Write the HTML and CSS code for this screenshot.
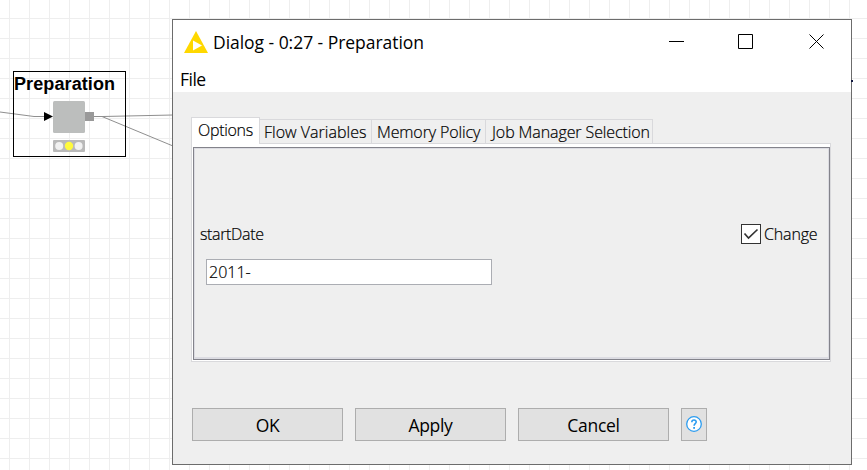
FILE: index.html
```html
<!DOCTYPE html>
<html lang="en">
<head>
<meta charset="utf-8">
<title>Dialog - 0:27 - Preparation</title>
<link rel="stylesheet" href="styles.css">
</head>
<body>
<main class="canvas">
  <svg class="wires" width="867" height="470" viewBox="0 0 867 470" fill="none" stroke="#8f8f8f">
    <path d="M0 112 L34 116.500 H46 M94 116.500 H103 L173 115 M102 116.500 L173 146"/>
  </svg>
  <section class="node">
    <h2 class="node-title">Preparation</h2>
    <svg class="node-body" width="56" height="53" viewBox="0 0 56 53">
      <path d="M4 11 L13 15.500 L4 20z" fill="#000"/>
      <rect x="13" y="0" width="32" height="32" rx="1.500" fill="#bcbebd"/>
      <rect x="45" y="11" width="9" height="9" fill="#999"/>
      <rect x="13" y="39" width="32" height="12" rx="1" fill="#b9b9b9"/>
      <circle cx="19.200" cy="45" r="4" fill="#f1f1f1"/>
      <circle cx="29" cy="45" r="4.200" fill="#fffa3c"/>
      <circle cx="38.600" cy="45" r="4" fill="#f1f1f1"/>
    </svg>
  </section>
  <section class="dialog">
    <header class="titlebar">
      <svg class="logo" width="24" height="22" viewBox="0 0 24 22">
        <path d="M12 0 L24 22 H0z" fill="#ffd800"/>
        <path d="M9 9.500 L18 14.500 L9 19.500z" fill="#fff"/>
      </svg>
      <h1 class="title">Dialog - 0:27 - Preparation</h1>
      <svg class="controls" width="157" height="16" viewBox="0 0 157 16" fill="none" stroke="#000">
        <path d="M0 7.500h15M69.500 .5h14v14h-14zM140.500 .5l14 14M154.500 .5l-14 14"/>
      </svg>
    </header>
    <nav class="menubar"><span class="menu">File</span></nav>
    <div class="content">
      <div class="tabs">
        <div class="tab active"><span class="t-options">Options</span></div>
        <div class="tab flow"><span class="t-flow">Flow Variables</span></div>
        <div class="tab memory"><span class="t-memory">Memory Policy</span></div>
        <div class="tab job"><span class="t-job">Job Manager Selection</span></div>
      </div>
      <div class="pane">
        <div class="pane-inner">
          <div class="row">
            <label class="name">startDate</label>
            <div class="check">
              <svg width="20" height="20" viewBox="0 0 20 20" fill="none">
                <rect x=".5" y=".5" width="19" height="19" fill="#fff" stroke="#333"/>
                <path d="M3.500 9.500 L7.500 14 L16.500 5.500" stroke="#333" stroke-width="1.700"/>
              </svg>
              <span class="t-change">Change</span>
            </div>
          </div>
          <div class="field"><span class="t-value">2011-</span></div>
        </div>
      </div>
      <footer class="buttons">
        <div class="button">OK</div>
        <div class="button">Apply</div>
        <div class="button">Cancel</div>
        <div class="button help">
          <svg width="16" height="16" viewBox="0 0 16 16">
            <circle cx="8" cy="8" r="7.300" fill="#fff" stroke="#2b9cf0" stroke-width="1.300"/>
            <path d="M5.800 6.200 C5.800 3.200 10.400 3.400 10.200 6 C10.100 7.600 8.100 7.600 8.100 9.700" fill="none" stroke="#2b9cf0" stroke-width="1.600"/>
            <rect x="7.200" y="11" width="1.800" height="1.800" fill="#2b9cf0"/>
          </svg>
        </div>
      </footer>
    </div>
  </section>
  <svg class="speck" width="2" height="2" viewBox="0 0 2 2"><rect width="2" height="2" fill="#101840"/></svg>
</main>
</body>
</html>
```
FILE: styles.css
```css
* { box-sizing: border-box; }
body { margin: 0; color: #000; font-family: "Open Sans", sans-serif; }
h1, h2 { margin: 0; }
svg { display: block; flex: none; }
.canvas {
  position: relative;
  width: 867px;
  height: 470px;
  overflow: hidden;
  background-color: #fff;
  background-image: linear-gradient(#eee 1px, transparent 1px), linear-gradient(90deg, #eee 1px, transparent 1px);
  background-size: 20px 20px;
  background-position: 9px 18px;
}
.wires { position: absolute; left: 0; top: 0; }
.speck { position: absolute; left: 851px; top: 80px; }
.node {
  position: absolute;
  left: 13px;
  top: 71px;
  width: 113px;
  height: 86px;
  border: 1px solid #000;
}
.node-title {
  height: 29px;
  font: bold 18px/25px "Liberation Sans", sans-serif;
  letter-spacing: .1px;
  white-space: nowrap;
}
.node-body { margin-left: 26px; }
.dialog {
  position: absolute;
  left: 172px;
  top: 19px;
  width: 680px;
  height: 446px;
  border: 1px solid #6c6c6c;
  background: #fff;
  white-space: nowrap;
}
.titlebar { display: flex; height: 45px; padding: 11px 25px 0 11px; }
.title { margin: -2px 0 0 5px; font-size: 17.5px; font-weight: 400; line-height: 26px; letter-spacing: -.04px; }
.controls { margin: 3px 0 0 auto; }
.menubar { height: 27px; padding-left: 7px; font-size: 17.5px; line-height: 29px; }
.menu { letter-spacing: -.5px; }
.content { height: 372px; padding: 25px 20px 0 18px; background: #efefef; }
.tabs { position: relative; display: flex; align-items: flex-end; height: 27px; }
.tab {
  height: 25px;
  border: 1px solid #d9d9dc;
  border-left: 0;
  font-size: 16px;
  font-weight: 300;
  line-height: 24px;
  padding-left: 5px;
}
.active {
  width: 69px;
  height: 27px;
  border-left: 1px solid #d9d9dc;
  border-bottom: 0;
  padding-left: 6px;
  background: #fff;
}
.t-options { letter-spacing: -.3px; }
.t-flow { letter-spacing: .02px; }
.t-memory { letter-spacing: -.12px; }
.t-job { letter-spacing: -.1px; }
.flow { width: 112px; padding-left: 4px; }
.memory { width: 114px; }
.job { width: 167px; padding-left: 6px; }
.pane {
  height: 219px;
  padding: 3px 0 1px 1px;
  border: 1px solid #d9d9dc;
  margin-top: -1px;
  background: #fff;
}
.pane-inner {
  height: 213px;
  border: 1px solid #83838b;
  box-shadow: inset 1px 1px #dcdce2, inset -1px 0 #dcdce2, inset 0 -2px #dcdce2;
  background: #efefef;
  padding: 73px 11px 0 6px;
}
.row { display: flex; justify-content: space-between; height: 38px; font-size: 16px; font-weight: 300; line-height: 26px; }
.name { letter-spacing: -.35px; }
.check { display: flex; width: 77px; }
.check svg { margin: 3px 3px 0 0; }
.t-change { letter-spacing: -.15px; }
.tab, .row, .field { -webkit-text-stroke: .2px #000; }
.field {
  width: 286px;
  height: 26px;
  margin-left: 6px;
  padding-left: 2px;
  border: 1px solid #abadb3;
  background: #fff;
  font-size: 16px;
  font-weight: 300;
  line-height: 24px;
}
.buttons { display: flex; gap: 12px; margin: 46px 0 0 1px; }
.button {
  width: 151px;
  height: 33px;
  border: 1px solid #adadad;
  background: #e1e1e1;
  font-size: 17.5px;
  letter-spacing: -.3px;
  line-height: 33px;
  text-align: center;
}
.help { width: 26px; padding: 7px 0 0 4px; }
```
